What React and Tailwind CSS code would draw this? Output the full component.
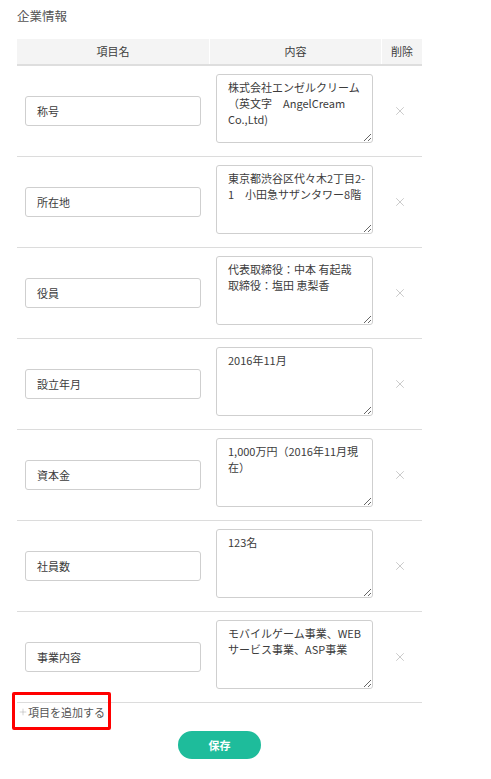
import { X, Plus } from "lucide-react";

const rows = [
  { name: "称号", body: "株式会社エンゼルクリーム\n（英文字　AngelCream Co.,Ltd)" },
  { name: "所在地", body: "東京都渋谷区代々木2丁目2-1　小田急サザンタワー8階" },
  { name: "役員", body: "代表取締役：中本 有起哉\n取締役：塩田 恵梨香" },
  { name: "設立年月", body: "2016年11月" },
  { name: "資本金", body: "1,000万円（2016年11月現在）" },
  { name: "社員数", body: "123名" },
  { name: "事業内容", body: "モバイルゲーム事業、WEBサービス事業、ASP事業" },
];

export default function App() {
  return (
    <div
      className="min-h-[779px] bg-white pl-[17px] pt-[7px] text-[11px] text-[#3c3c3c]"
      style={{ fontFamily: '"Noto Sans CJK JP", "Noto Sans", sans-serif' }}
    >
      <h2 className="text-[12.5px] leading-[18px] text-[#555]">企業情報</h2>

      <div className="relative mt-[14px] w-[405px]">
        <div className="grid grid-cols-[192px_171px_40px] gap-x-px border-b-2 border-[#dedede]">
          <div className="bg-[#f4f4f4] py-[5px] text-center leading-[15px]">項目名</div>
          <div className="bg-[#f4f4f4] py-[5px] text-center leading-[15px]">内容</div>
          <div className="bg-[#f4f4f4] py-[5px] text-center leading-[15px]">削除</div>
        </div>

        {rows.map((r) => (
          <div
            key={r.name}
            className="grid h-[91px] grid-cols-[192px_172px_41px] border-b border-[#dcdcdc]"
          >
            <div className="flex items-center px-2">
              <div className="flex h-[30px] w-full items-center rounded-[3px] border border-[#cfcfcf] px-[11px] pt-px">
                {r.name}
              </div>
            </div>
            <div className="pl-[7px] pt-[8px]">
              <textarea
                readOnly
                value={r.body}
                className="h-[69px] w-[157px] resize-y rounded-[3px] border border-[#cfcfcf] pl-[11px] pr-[2px] pt-[4px] leading-[16px] text-[#3c3c3c] outline-none"
                style={{ fontFamily: '"Noto Sans CJK JP", "Noto Sans", sans-serif', fontSize: 11 }}
              />
            </div>
            <div className="flex items-center justify-center pr-[3px]">
              <X size={14} strokeWidth={1.5} className="text-[#c4c4c4]" />
            </div>
          </div>
        ))}

        <div className="flex h-[18px] items-center pl-[1px]">
          <Plus size={10} strokeWidth={1.25} className="text-[#aaa]" />
          <span className="text-[#555]">項目を追加する</span>
        </div>

        <div className="pointer-events-none absolute left-[-5px] top-[653px] h-[38px] w-[99px] rounded-[2px] border-[3px] border-[#ff0000]" />

        <div className="mt-[10px] flex justify-center">
          <button className="h-[28px] w-[83px] rounded-full bg-[#1ebc9b] text-[11px] font-bold text-white">
            保存
          </button>
        </div>
      </div>
    </div>
  );
}
